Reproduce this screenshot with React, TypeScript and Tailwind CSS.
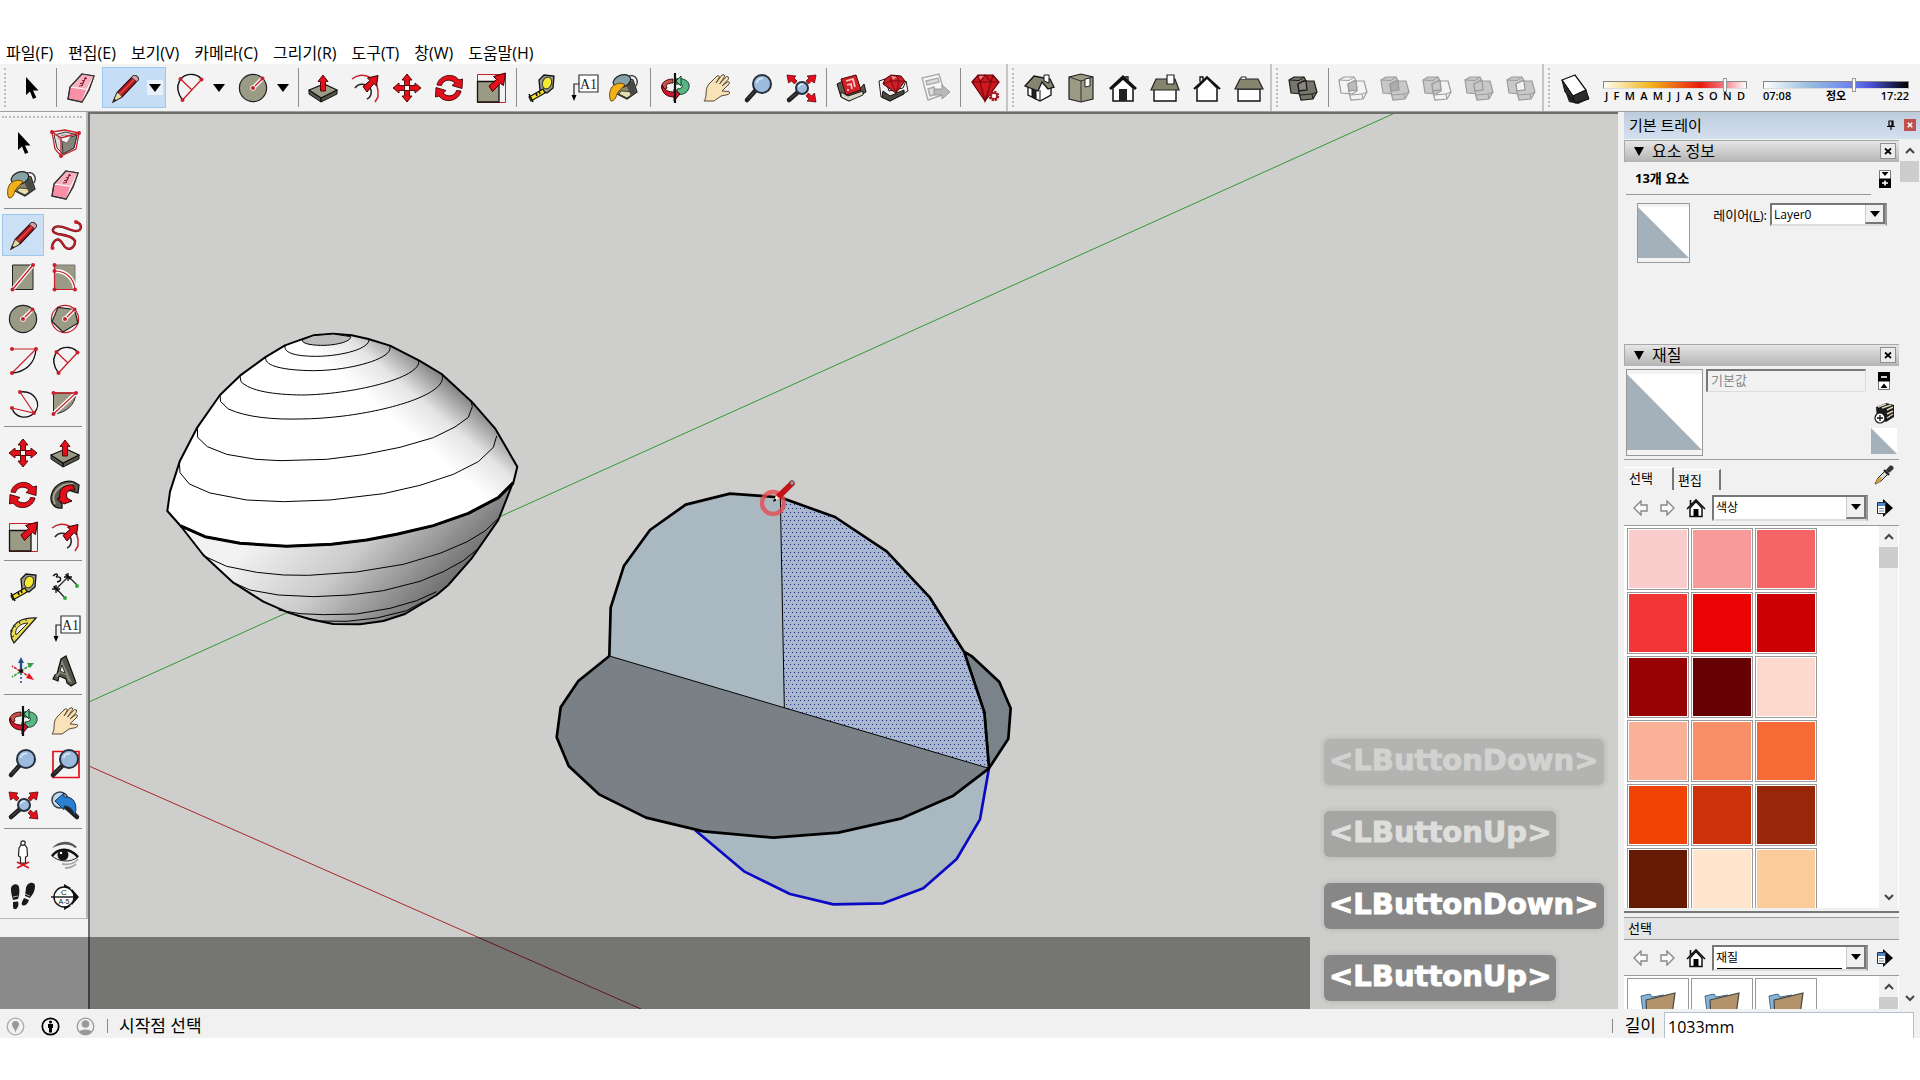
import { Fragment } from "react";
import type { ReactNode } from "react";

const RED = "#e3101c";
const DARK_RED = "#c8202c";
const OLIVE = "#9b9a84";

function Icon({ children }: { children: ReactNode }) {
  return (
    <svg viewBox="0 0 32 32" className="h-8 w-8 shrink-0 overflow-visible" fill="none" aria-hidden="true">
      {children}
    </svg>
  );
}

function Dots({ at }: { at: [number, number][] }) {
  return (
    <>
      {at.map(([x, y]) => (
        <circle key={`${x}-${y}`} cx={x} cy={y} r="2" fill={DARK_RED} />
      ))}
    </>
  );
}

function RadiusLine() {
  return (
    <>
      <path d="M16 16 25.5 6.5" stroke="#fff" strokeWidth="4" />
      <path d="M16 16 25.5 6.5" stroke={DARK_RED} strokeWidth="1.4" />
      <circle cx="16" cy="16" r="2.8" fill="#fff" />
      <Dots at={[[16, 16], [25.5, 6.5]]} />
    </>
  );
}

function Lens({ x = 19, y = 12, r = 9 }: { x?: number; y?: number; r?: number }) {
  return (
    <>
      <path d={`M${x - r * 0.7} ${y + r * 0.7} 4 28`} stroke="#222" strokeWidth="4.6" strokeLinecap="round" />
      <path d={`M${x - r * 0.8 - 1} ${y + r * 0.8 + 1} 5 26.5`} stroke="#555" strokeWidth="1" />
      <circle cx={x} cy={y} r={r} fill="#9dbbdc" stroke="#26303c" strokeWidth="2" />
      <path d={`M${x - r * 0.6} ${y - 1}A${r * 0.6} ${r * 0.6} 0 0 1 ${x + 1} ${y - r * 0.6}`} stroke="#dcebf8" strokeWidth="1.6" />
    </>
  );
}

const BigArrow = () => (
  <path d="M17.500 19.500 14 14 21.500 7.500 18.500 4.500 30.500 1 28.500 13.500 25.500 11.500Z" fill={RED} stroke="#300" strokeWidth="1" />
);

const CursorIcon = () => (
  <Icon>
    <path d="M11 5V23L15 19.500 18 27 21.300 25.500 18 18.500H23.500Z" fill="#000" />
  </Icon>
);

const ComponentIcon = () => (
  <Icon>
    <path d="M5 8 17 5 28 8 25 21 14 27 8 21Z" fill="#ddd" stroke="#333" />
    <path d="M13 13 28 8 25 21 14 27Z" fill="#85837a" stroke="#333" />
    <path d="M9 10 15 8 22 9 18 16 11 13Z" fill="#f8f8f8" stroke="#666" strokeWidth=".8" />
    <path d="M3 5 16 3 30 6 27 22 12 29 6 22ZM3 5 12 11 30 6M12 11V29" stroke={DARK_RED} strokeWidth="1.300" />
    <Dots at={[[3, 5], [30, 6], [12, 29]]} />
  </Icon>
);

const PaintIcon = () => (
  <Icon>
    <path d="M12 4 24 8 28 20 18 27 8 22Z" fill="#8b866e" stroke="#222" strokeWidth="1.200" />
    <path d="M12 19 26 20 18 26 10 22Z" fill="#e8dfae" stroke="#222" strokeWidth=".8" />
    <path d="M20 8 24 10 27 20 22 24 18 15Z" fill="#4a4a45" />
    <ellipse cx="13" cy="9" rx="9" ry="6" transform="rotate(-20 13 9)" fill="#86a2a6" stroke="#222" strokeWidth="1.200" />
    <path d="M20 4C27 2 30 9 27 14" stroke="#333" strokeWidth="1.300" />
    <path d="M16 13C13 16 10 18 8 22 7 26 5 29 2 29 0 26 0 19 3 15 7 11 12 10 16 13Z" fill="#f2b01c" stroke="#6d4a00" />
  </Icon>
);

const EraserIcon = () => (
  <Icon>
    <path d="M17 2 29 4 24 18 17 30 3 27 5 15Z" fill="#f78fa5" stroke="#333" strokeWidth="1.200" />
    <path d="M17 2 29 4 23 17 5 15Z" fill="#f4b3bf" />
    <path d="M5 15 22 17.500 17 30M22 17.500 29 4" stroke="#fff" strokeWidth="1.100" />
    <path d="M14 14 18 13.500M15 11.500 19 11M17 8.500 20 9M19 6 22 6.500M17 13 21 5" stroke="#8a2040" strokeWidth="1.100" />
    <path d="M17 2 29 4 24 18 17 30 3 27 5 15Z" stroke="#333" strokeWidth="1.200" />
  </Icon>
);

const PencilIcon = () => (
  <Icon>
    <path d="M4 30 8 20.500 24.500 3.500Q29 3 29.500 7.500L13 25Z" fill="#b51c22" stroke="#2a0b0b" strokeWidth="1.100" />
    <path d="M10.500 22.500 27 5.500" stroke="#e24a4a" strokeWidth="1.400" />
    <path d="M4 30 8 20.500Q11 21 13 25Z" fill="#e6d9a4" stroke="#333" strokeWidth=".8" />
    <path d="M4 30 5.500 26.500 7.500 28.500Z" fill="#222" />
    <path d="M22.500 5.500 24.500 3.500Q29 3 29.500 7.500L27.500 9.500Z" fill="#d8a0a8" stroke="#333" strokeWidth=".8" />
  </Icon>
);

const FreehandIcon = () => (
  <Icon>
    <path
      d="M27 3C34 5 33 12 27 12 20 12 13 5 6 8 2 11 4 14 9 15 15 16 24 17 26 22 26 29 20 32 16 28 13 24 11 19 7 21 4 23 3 26 3 29"
      stroke="#5c1014"
      strokeWidth="2.400"
    />
    <path
      d="M27 3C34 5 33 12 27 12 20 12 13 5 6 8 2 11 4 14 9 15 15 16 24 17 26 22 26 29 20 32 16 28 13 24 11 19 7 21 4 23 3 26 3 29"
      stroke={DARK_RED}
      strokeWidth="1.400"
    />
    <Dots at={[[27, 3], [3.5, 29]]} />
  </Icon>
);

const RectIcon = () => (
  <Icon>
    <path d="M5.500 4H26V28.500H5.500Z" fill={OLIVE} stroke="#222" />
    <path d="M5.500 28.500 26 4" stroke="#fff" strokeWidth="4" />
    <path d="M5.500 28.500 26 4" stroke={DARK_RED} strokeWidth="1.400" />
    <Dots at={[[5.5, 28.5], [26, 4]]} />
  </Icon>
);

const RotatedRectIcon = () => (
  <Icon>
    <path d="M5.500 4H26V28.500H5.500Z" fill={OLIVE} stroke="#777" />
    <path d="M5.500 10C17 10 25 17 26 28.500" stroke="#fff" strokeWidth="4" />
    <path d="M5.500 4V28.500H26C25 17 17 10 5.500 10" stroke={DARK_RED} strokeWidth="1.200" />
    <Dots at={[[5.5, 4], [5.5, 10], [5.5, 28.5], [26, 28.5]]} />
  </Icon>
);

const CircleIcon = () => (
  <Icon>
    <circle cx="16" cy="16" r="13.600" fill={OLIVE} stroke="#222" strokeWidth="1.200" />
    <RadiusLine />
  </Icon>
);

const PolygonIcon = () => (
  <Icon>
    <circle cx="16" cy="16" r="13.600" stroke={DARK_RED} strokeWidth="1.200" />
    <path d="M25.500 6.500 29 20 14 29 3 18.500 9 4.500Z" fill={OLIVE} stroke="#222" strokeWidth="1.200" />
    <RadiusLine />
  </Icon>
);

const ArcIcon = () => (
  <Icon>
    <path d="M29 4C28 19 18 27 5 28" stroke="#111" strokeWidth="1.300" />
    <path d="M5 4H29L5 28" stroke={DARK_RED} strokeWidth="1.200" />
    <Dots at={[[5, 4], [29, 4], [5, 28]]} />
  </Icon>
);

const TwoPointArcIcon = () => (
  <Icon>
    <path d="M9.500 28C-1 14 8 1 20 2.500 24 3 27 5 28.500 7.500" stroke="#111" strokeWidth="1.400" />
    <path d="M9.500 28 28.500 7.500M7.500 7 19 18" stroke={DARK_RED} strokeWidth="1.300" />
    <Dots at={[[9.5, 28], [28.5, 7.5], [7.5, 7]]} />
  </Icon>
);

const ThreePointArcIcon = () => (
  <Icon>
    <path d="M13 5C27 3 36 17 27 26 20 33 8 31 5 21" stroke="#111" strokeWidth="1.300" />
    <path d="M13 5 27 26 5 21" stroke={DARK_RED} strokeWidth="1.200" />
    <Dots at={[[13, 5], [27, 26], [5, 21]]} />
  </Icon>
);

const PieIcon = () => (
  <Icon>
    <path d="M4.500 6H27C26 18 17 26 4.500 27Z" fill={OLIVE} stroke="#222" />
    <path d="M4.500 27 27 6" stroke="#fff" strokeWidth="4" />
    <path d="M4.500 27 27 6H4.500" stroke={DARK_RED} strokeWidth="1.300" />
    <Dots at={[[4.5, 6], [27, 6], [4.5, 27]]} />
  </Icon>
);

const MoveIcon = () => (
  <Icon>
    {[0, 90, 180, 270].map((r) => (
      <path key={r} transform={`rotate(${r} 16 16)`} d="M16 2 21 8H18.500V13.500H13.500V8H11Z" fill={RED} stroke="#400" strokeWidth=".9" />
    ))}
  </Icon>
);

const RotateIcon = () => (
  <Icon>
    {[0, 180].map((r) => (
      <path
        key={r}
        transform={`rotate(${r} 16 16)`}
        d="M4 13C6 3 20 0 26 8L29.500 7 29 16.500 19 13.500 22 11C17 6 10 8 8.500 13.500Z"
        fill={RED}
        stroke="#400"
        strokeWidth=".9"
      />
    ))}
  </Icon>
);

const ScaleIcon = () => (
  <Icon>
    <path d="M2.500 2.500H30.500V30.500H2.500Z" stroke={DARK_RED} />
    <path d="M2.500 9.500H24V30H2.500Z" fill={OLIVE} stroke="#111" strokeWidth="1.300" />
    <BigArrow />
  </Icon>
);

const PushPullIcon = () => (
  <Icon>
    <path d="M2 18 14 26V30L2 22ZM14 26 30 18V22L14 30Z" fill="#55554b" stroke="#111" />
    <path d="M2 18 17 12 30 18 14 26Z" fill={OLIVE} stroke="#111" strokeWidth="1.200" />
    <path d="M16 3 21 9.500H18.500V19H13.500V9.500H11Z" fill={RED} stroke="#400" strokeWidth=".9" />
  </Icon>
);

const FollowMeIcon = () => (
  <Icon>
    <path d="M13 29C4 30 0 22 3 14 6 5 17 0 25 3L30 6 29 14 25 13C17 9 10 14 10 21L13 25Z" fill="#5c5b50" stroke="#111" strokeWidth="1.300" />
    <path d="M6 25C1 15 10 4 24 5" stroke="#aaa894" strokeWidth="1.800" />
    <path d="M24 6C14 5 9 12 11 19L8 20 15 25 23 22 18 19C16 13 20 10 26 11Z" fill={RED} stroke="#300" />
  </Icon>
);

const OffsetIcon = () => (
  <Icon>
    <path d="M3 7C14-2 31 6 29 25L26 30" stroke={DARK_RED} strokeWidth="1.500" />
    <path d="M6 16C11 9 20 13 22 18 23 22 21 26 18 27" stroke="#222" strokeWidth="1.500" />
    <path d="M18 20 14 14.500 21 8.500 18.500 6 29 3.500 27.500 14 25 11.500Z" fill={RED} stroke="#300" />
  </Icon>
);

const TapeIcon = () => (
  <Icon>
    <path d="M14 8 19 3 29 4 28 16 22 21 15 18Z" fill="#9a9887" stroke="#111" strokeWidth="1.300" />
    <ellipse cx="22" cy="11" rx="4.500" ry="6" transform="rotate(20 22 11)" fill="#f6ea30" stroke="#333" />
    <path d="M18 17 4 25 6 29 20 21Z" fill="#f0df25" stroke="#111" strokeWidth="1.200" />
    <path d="M4 22 8 30M11 21 12 24M14 19 15 22" stroke="#111" strokeWidth="1.600" />
  </Icon>
);

const DimensionIcon = () => (
  <Icon>
    <path d="M7 18 19 6M5 15 16 27M17 3 28 14" stroke="#222" strokeWidth="1.200" />
    <path d="M3 18H11M7 14V22M4.500 15.500 9.500 20.500M15 6H23M19 2V10M16.500 3.500 21.500 8.500" stroke="#111" strokeWidth="1.300" />
    <path d="M4 5C8 1 10 4 7 6 13 5 13 10 8 11" stroke="#111" strokeWidth="1.400" />
    <circle cx="16" cy="27" r="2" fill="#35a843" />
    <circle cx="28" cy="15" r="2" fill="#35a843" />
  </Icon>
);

const ProtractorIcon = () => (
  <Icon>
    <path d="M7 30C-1 18 8 4 29 5Z" fill="#eadb55" stroke="#222" strokeWidth="1.300" />
    <path d="M9 22C7 16 13 10 21 10Z" fill="#f3f3f3" stroke="#222" />
    <path d="M4 24 7 23M3 18 6 18M6 12 9 14M12 8 13 11M19 6 19 8" stroke="#333" />
  </Icon>
);

const TextIcon = () => (
  <Icon>
    <path d="M12 3H31V20H12Z" fill="#fff" stroke="#333" strokeWidth="1.200" />
    <path d="M12 12H7V24" stroke="#222" strokeWidth="1.200" />
    <path d="M4.500 23H9.500L7 29Z" fill="#000" />
    <text x="21.500" y="16.500" textAnchor="middle" fontFamily="Liberation Serif, serif" fontSize="14" fill="#222">A1</text>
  </Icon>
);

const AxesIcon = () => (
  <Icon>
    <path d="M14 17V6" stroke="#234f92" strokeWidth="2.400" />
    <path d="M11 8 14 2 17 8Z" fill="#234f92" />
    <path d="M14 18V28" stroke="#234f92" strokeWidth="1.500" strokeDasharray="2 2" />
    <path d="M14 16 22 11M13 17 5 22" stroke="#35a045" strokeWidth="1.600" strokeDasharray="3 1" />
    <path d="M20 8 27 8 23 13Z" fill="#35a045" />
    <path d="M14 16 21 21M13 16 5 11" stroke={DARK_RED} strokeWidth="1.600" strokeDasharray="3 1" />
    <path d="M22 18 27 25 19 23Z" fill={RED} />
    <circle cx="14" cy="16" r="2" fill="#111" />
  </Icon>
);

const Text3dIcon = () => (
  <Icon>
    <path d="M12 4 17 1 26 25 27 28 22 31 18 28 17 24 10 21 9 26 4 24 6 20 8 19Z" fill="#55554b" stroke="#111" strokeWidth="1.200" />
    <path d="M13 5 23 28 19 26 17 20 11 18 9 22 6 21 10 17Z" fill="#8c8a78" />
    <path d="M13 10 11 16 16 18Z" fill="#f3f3f3" stroke="#111" strokeWidth=".8" />
  </Icon>
);

const OrbitIcon = () => (
  <Icon>
    <path d="M17 7C26 5 33 11 29 18 27 22 22 23 18 22V17C23 17 25 14 22 12L17 12Z" fill="#59b584" stroke="#123d25" />
    <path d="M14 7C5 7 0 13 4 19L8 16C6 12 10 11 14 11Z" fill="#c8504c" stroke="#401010" />
    <path d="M3 13C2 22 9 25 15 25V29L21 22 15 17V20C10 20 6 19 3 13Z" fill="#cc1830" stroke="#400" />
    <path d="M16 1V31" stroke="#111" strokeWidth="2.200" />
    <path d="M22 4 17 9 22 14Z" fill="#75c79a" stroke="#123d25" />
  </Icon>
);

const HandIcon = () => (
  <Icon>
    <path
      d="M3 29C7 24 3 18 8 12L16 4Q18 3 18.500 5L15 11 21 3Q23.500 2 24 4L18.500 12 25.500 4.500Q28 4 27.500 7L21 14 27 9.500Q29.500 10 28 12L21 19 28 19.500Q30 21 27 22.500L20 24 13 29Z"
      fill="#fae2b8"
      stroke="#5b4a36"
      strokeWidth="1"
    />
  </Icon>
);

const ZoomIcon = () => (
  <Icon>
    <Lens />
  </Icon>
);

const ZoomWindowIcon = () => (
  <Icon>
    <path d="M4 4.500H30V30.500H4Z" stroke={RED} strokeWidth="1.700" />
    <Lens x={20} />
  </Icon>
);

const ZoomExtentsIcon = () => (
  <Icon>
    <Lens x={17} y={16} r={6} />
    <path d="M2 3 11 4 9 6 12 9 9.500 12 6.500 9 3.500 11ZM31 3 22 4 24 6 21 9 23.500 12 26.500 9 29.500 11ZM31 30 22 29 24 27 21 24 23.500 21 26.500 24 29.500 21Z" fill={RED} stroke="#400" strokeWidth=".7" />
  </Icon>
);

const PreviousIcon = () => (
  <Icon>
    <circle cx="11" cy="11" r="8" fill="#c5d8e8" stroke="#33414e" strokeWidth="1.500" />
    <path d="M17 18 28 28" stroke="#222" strokeWidth="4.500" strokeLinecap="round" />
    <path d="M6 12 15 4V8C24 7 29 14 26 26 23 20 21 17 15 17V21Z" fill="#2b7fd0" stroke="#12365e" />
  </Icon>
);

const PositionCameraIcon = () => (
  <Icon>
    <path d="M10 29 22 23M10 23 22 29M16 21V26" stroke={RED} strokeWidth="1.500" />
    <path d="M14 6 12 9 11.500 17 13.500 18V24H18.500V18L20.500 17 20 9 18 6Z" fill="#fff" stroke="#222" strokeWidth="1.200" />
    <circle cx="16" cy="4" r="2.200" fill="#fff" stroke="#222" strokeWidth="1.200" />
  </Icon>
);

const LookAroundIcon = () => (
  <Icon>
    <path d="M3 9C10 1 21 1 28 8L26 9C20 4 12 5 3 9Z" fill="#555" />
    <path d="M3 17C9 8 22 8 29 18 21 24 10 23 3 17Z" fill="#eee" stroke="#222" />
    <path d="M3 17C9 9 20 8 29 18" stroke="#111" strokeWidth="2.600" />
    <circle cx="14" cy="16" r="5.500" fill="#111" />
    <circle cx="12" cy="14" r="1.300" fill="#fff" />
    <path d="M13 25C20 26 26 24 29 20M16 29C21 29 25 27 27 25" stroke="#aaa" strokeWidth="1.800" />
  </Icon>
);

const WalkIcon = () => (
  <Icon>
    <path d="M4 9C3 3 11 1 12 6 13 11 12 15 11 18L6 19C5 15 4 12 4 9ZM6 21 11 20.500C13 27 7 31 6 26Z" fill="#1a1a1a" />
    <path d="M19 7C20 1 28 0 28 5 28 11 25 14 23 17L18 15ZM17 17 22 19C20 26 13 26 15 21Z" fill="#1a1a1a" />
    <path d="M6 16 11 15M18 13 23 15" stroke="#ccc" strokeWidth=".8" />
  </Icon>
);

const SectionIcon = () => (
  <Icon>
    <path d="M15 3 22 7H15ZM23 8 30 16 23 24ZM15 29 22 25H15Z" fill="#111" />
    <circle cx="15" cy="16" r="10" fill="#fff" stroke="#111" strokeWidth="1.400" />
    <path d="M2 16H29" stroke="#111" strokeWidth="1.400" />
    <text x="15" y="14" textAnchor="middle" fontFamily="Liberation Sans, sans-serif" fontSize="8" fill="#111">C</text>
    <text x="15" y="23" textAnchor="middle" fontFamily="Liberation Sans, sans-serif" fontSize="7" fill="#111">A-5</text>
  </Icon>
);

const WarehouseIcon = () => (
  <Icon>
    <path d="M2 12 8 9 11 22 25 17 29 12 31 20 14 29 6 25Z" fill="#5d5a50" stroke="#111" />
    <path d="M6 20 13 24 28 19V23L14 29 6 25Z" fill="#d8d4c8" stroke="#111" strokeWidth=".9" />
    <path d="M6 7 21 3 26 18 11 23Z" fill="#d32128" stroke="#400" />
    <path d="M11 9 18 7 20 15M12 13 16 12 17 17M13 17V19" stroke="#f4c9c9" strokeWidth="1.800" />
  </Icon>
);

const ExtensionWarehouseIcon = () => (
  <Icon>
    <path d="M2 9 8 7 12 19 26 16 29 9 31 19 13 29 4 25Z" fill="#f2f0ec" stroke="#222" />
    <path d="M6 19 13 24 27 18V22L13 29 5 25Z" fill="#4a4840" stroke="#111" />
    <path d="M8 7 14 3 24 4 28 9 19 21 6 12Z" fill="#cf1f27" stroke="#400" />
    <path d="M6 12 14 9 28 9M14 9 19 21 22 9M14 3 14 9 20 4 22 9" stroke="#7b0a10" />
    <path d="M14 4 20 5 16 8Z" fill="#f09090" />
  </Icon>
);

const LayoutIcon = () => (
  <Icon>
    <path d="M3 6 20 2 26 22 9 28Z" fill="#f8f8f8" stroke="#aaa" strokeWidth="1.400" />
    <path d="M7 9 19 6 20 10 8 13ZM9 17 15 15 17 22 11 24Z" fill="#ddd" stroke="#aaa" strokeWidth="1.400" />
    <path d="M15 17H23V13L31 20 23 27V23H15Z" fill="#b8b8b8" stroke="#999" />
  </Icon>
);

const RubyIcon = () => (
  <Icon>
    <path d="M3 10 9 3H24L30 10 16 29Z" fill="#cf1720" stroke="#600008" strokeWidth="1.200" />
    <path d="M3 10H30M9 3 11 10 16 29 22 10 24 3M11 10 16 3 22 10" stroke="#7b0a10" strokeWidth="1.200" />
    <path d="M10 4H15L11 8Z" fill="#f28088" />
    <circle cx="25" cy="24" r="4" fill="#f3f3f3" stroke="#a31820" strokeWidth="2.600" strokeDasharray="2.200 .9" />
    <circle cx="25" cy="24" r="3" stroke="#a31820" strokeWidth="1.500" />
  </Icon>
);

const IsoHouseIcon = () => (
  <Icon>
    <path d="M5 15V23L17 29 28 23V12L18 6Z" fill="#fff" stroke="#111" strokeWidth="1.300" />
    <path d="M17 18V29M9 17 13 19V27L9 25Z" stroke="#111" fill="#222" />
    <path d="M2 14 11 4 27 7 31 15 25 17 19 10 15 19Z" fill="#85846f" stroke="#111" strokeWidth="1.300" />
    <path d="M21 3H26V11L21 9Z" fill="#fff" stroke="#111" />
  </Icon>
);

const TopHouseIcon = () => (
  <Icon>
    <path d="M4 5 16 2 28 5V27L16 30 4 27Z" fill={OLIVE} stroke="#222" strokeWidth="1.200" />
    <path d="M16 9V30M4 5 16 9 28 5" stroke="#333" />
    <path d="M20 7 25 6V14L20 15Z" fill="#fff" stroke="#222" />
  </Icon>
);

const FrontHouseIcon = () => (
  <Icon>
    <path d="M6 16 16 7 26 16V29H6Z" fill="#fff" stroke="#111" strokeWidth="1.500" />
    <path d="M3 17 16 5 29 17" stroke="#111" strokeWidth="2.800" />
    <path d="M18 5H21V8" stroke="#111" strokeWidth="1.300" />
    <path d="M12 17H20V29H12Z" fill="#222" />
  </Icon>
);

const RightHouseIcon = () => (
  <Icon>
    <path d="M5 16H27V29H5Z" fill="#fff" stroke="#111" strokeWidth="1.400" />
    <path d="M7 7H26L30 18H2Z" fill="#85846f" stroke="#222" strokeWidth="1.200" />
    <path d="M18 3H25V12H18Z" fill="#fff" stroke="#222" strokeWidth="1.200" />
  </Icon>
);

const BackHouseIcon = () => (
  <Icon>
    <path d="M6 16 16 6 26 16V29H6Z" fill="#fff" stroke="#111" strokeWidth="1.500" />
    <path d="M3 17 16 5 29 17" stroke="#111" strokeWidth="2" />
    <path d="M9 10V5H12V8" stroke="#111" strokeWidth="1.300" />
  </Icon>
);

const LeftHouseIcon = () => (
  <Icon>
    <path d="M5 17H27V29H5Z" fill="#fff" stroke="#111" strokeWidth="1.400" />
    <path d="M7 7H25L30 17H2Z" fill="#85846f" stroke="#222" strokeWidth="1.200" />
    <path d="M8 7V5H13V7" fill="#fff" stroke="#222" />
  </Icon>
);

// Two overlapping boxes; the solid tools differ by which part is filled.
function SolidIcon({ a, b, mid, line = "#9c9c9c" }: { a: string; b: string; mid: string; line?: string }) {
  return (
    <Icon>
      <path d="M2 8 7 5 17 5 19 9 20 19 15 22 4 21Z" fill={a} stroke={line} strokeWidth="1.200" />
      <path d="M11 12 17 9 27 9 30 20 26 27 14 28 12 21Z" fill={b} stroke={line} strokeWidth="1.200" />
      <path d="M2 8 12 8.500 17 5M13 23 25 22 30 20M25 22 26 27" stroke={line} strokeWidth="1" />
      <path d="M11 12 17 9 19 9 20 18 12 19Z" fill={mid} stroke={line} strokeWidth="1.300" />
    </Icon>
  );
}

const ShadowIcon = () => (
  <Icon>
    <path d="M6 19 15 26 28 22 30 27 19 32 10 30Z" fill="#222" />
    <path d="M3 8 16 3 27 18 14 24Z" fill="#fff" stroke="#111" strokeWidth="1.300" />
    <path d="M3 8 6 20 14 28V24ZM14 24 27 18 30 27 16 31Z" fill="#2b2b2b" stroke="#111" />
  </Icon>
);

type Tool = { label: string; icon: ReactNode; active?: boolean; menu?: boolean };

const mainTools: Tool[][] = [
  [{ label: "Select", icon: <CursorIcon /> }],
  [
    { label: "Eraser", icon: <EraserIcon /> },
    { label: "Line", icon: <PencilIcon />, active: true, menu: true },
    { label: "Arc", icon: <TwoPointArcIcon />, menu: true },
    { label: "Circle", icon: <CircleIcon />, menu: true },
  ],
  [
    { label: "Push/Pull", icon: <PushPullIcon /> },
    { label: "Offset", icon: <OffsetIcon /> },
    { label: "Move", icon: <MoveIcon /> },
    { label: "Rotate", icon: <RotateIcon /> },
    { label: "Scale", icon: <ScaleIcon /> },
  ],
  [
    { label: "Tape Measure", icon: <TapeIcon /> },
    { label: "Text", icon: <TextIcon /> },
    { label: "Paint Bucket", icon: <PaintIcon /> },
  ],
  [
    { label: "Orbit", icon: <OrbitIcon /> },
    { label: "Pan", icon: <HandIcon /> },
    { label: "Zoom", icon: <ZoomIcon /> },
    { label: "Zoom Extents", icon: <ZoomExtentsIcon /> },
  ],
  [
    { label: "3D Warehouse", icon: <WarehouseIcon /> },
    { label: "Extension Warehouse", icon: <ExtensionWarehouseIcon /> },
    { label: "Send to LayOut", icon: <LayoutIcon /> },
  ],
  [{ label: "Extension Manager", icon: <RubyIcon /> }],
];

const viewTools: Tool[][] = [
  [
    { label: "Iso", icon: <IsoHouseIcon /> },
    { label: "Top", icon: <TopHouseIcon /> },
    { label: "Front", icon: <FrontHouseIcon /> },
    { label: "Right", icon: <RightHouseIcon /> },
    { label: "Back", icon: <BackHouseIcon /> },
    { label: "Left", icon: <LeftHouseIcon /> },
  ],
];

const solidTools: Tool[][] = [
  [{ label: "Outer Shell", icon: <SolidIcon a="#77766a" b="#77766a" mid="#88877a" line="#1c1c1c" /> }],
  [
    { label: "Intersect", icon: <SolidIcon a="none" b="none" mid="#bbb" /> },
    { label: "Union", icon: <SolidIcon a="#c8c8c8" b="#c8c8c8" mid="#adadad" /> },
    { label: "Subtract", icon: <SolidIcon a="#c8c8c8" b="none" mid="#c8c8c8" /> },
    { label: "Trim", icon: <SolidIcon a="#c8c8c8" b="#c8c8c8" mid="#c8c8c8" /> },
    { label: "Split", icon: <SolidIcon a="#c8c8c8" b="#c8c8c8" mid="#f3f3f3" /> },
  ],
];

const sideTools: Tool[][] = [
  [
    { label: "Select", icon: <CursorIcon /> },
    { label: "Make Component", icon: <ComponentIcon /> },
    { label: "Paint Bucket", icon: <PaintIcon /> },
    { label: "Eraser", icon: <EraserIcon /> },
  ],
  [
    { label: "Line", icon: <PencilIcon />, active: true },
    { label: "Freehand", icon: <FreehandIcon /> },
    { label: "Rectangle", icon: <RectIcon /> },
    { label: "Rotated Rectangle", icon: <RotatedRectIcon /> },
    { label: "Circle", icon: <CircleIcon /> },
    { label: "Polygon", icon: <PolygonIcon /> },
    { label: "Arc", icon: <ArcIcon /> },
    { label: "2 Point Arc", icon: <TwoPointArcIcon /> },
    { label: "3 Point Arc", icon: <ThreePointArcIcon /> },
    { label: "Pie", icon: <PieIcon /> },
  ],
  [
    { label: "Move", icon: <MoveIcon /> },
    { label: "Push/Pull", icon: <PushPullIcon /> },
    { label: "Rotate", icon: <RotateIcon /> },
    { label: "Follow Me", icon: <FollowMeIcon /> },
    { label: "Scale", icon: <ScaleIcon /> },
    { label: "Offset", icon: <OffsetIcon /> },
  ],
  [
    { label: "Tape Measure", icon: <TapeIcon /> },
    { label: "Dimension", icon: <DimensionIcon /> },
    { label: "Protractor", icon: <ProtractorIcon /> },
    { label: "Text", icon: <TextIcon /> },
    { label: "Axes", icon: <AxesIcon /> },
    { label: "3D Text", icon: <Text3dIcon /> },
  ],
  [
    { label: "Orbit", icon: <OrbitIcon /> },
    { label: "Pan", icon: <HandIcon /> },
    { label: "Zoom", icon: <ZoomIcon /> },
    { label: "Zoom Window", icon: <ZoomWindowIcon /> },
    { label: "Zoom Extents", icon: <ZoomExtentsIcon /> },
    { label: "Previous", icon: <PreviousIcon /> },
  ],
  [
    { label: "Position Camera", icon: <PositionCameraIcon /> },
    { label: "Look Around", icon: <LookAroundIcon /> },
    { label: "Walk", icon: <WalkIcon /> },
    { label: "Section Plane", icon: <SectionIcon /> },
  ],
];

const menus = ["파일(F)", "편집(E)", "보기(V)", "카메라(C)", "그리기(R)", "도구(T)", "창(W)", "도움말(H)"];

const swatches = [
  "bg-[#fbcccc]", "bg-[#f99a9a]", "bg-[#f56565]",
  "bg-[#f23535]", "bg-[#ec0303]", "bg-[#cc0003]",
  "bg-[#990204]", "bg-[#660103]", "bg-[#fcd9cc]",
  "bg-[#f9b298]", "bg-[#f98f66]", "bg-[#f66b35]",
  "bg-[#f04304]", "bg-[#cc330a]", "bg-[#982608]",
  "bg-[#661a04]", "bg-[#fee5cc]", "bg-[#fbcc99]",
];

function ToolButton({ tool }: { tool: Tool }) {
  if (tool.menu) {
    return (
      <span className={`flex h-[41px] w-16 items-center border ${tool.active ? "border-[#99c9ef] bg-[#c5def5]" : "border-transparent"}`}>
        <button type="button" aria-label={tool.label} className="flex w-11 items-center justify-center">
          {tool.icon}
        </button>
        <button
          type="button"
          aria-label={`${tool.label} menu`}
          className={`flex h-[15px] w-4 items-center justify-center ${tool.active ? "bg-[#e9f0f8]" : ""}`}
        >
          <svg viewBox="0 0 12 8" className="h-2 w-3" aria-hidden="true">
            <path d="M0 0H12L6 8Z" fill="#000" />
          </svg>
        </button>
      </span>
    );
  }
  return (
    <button
      type="button"
      aria-label={tool.label}
      className={`flex h-[42px] w-[42px] items-center justify-center border ${tool.active ? "border-[#99c9ef] bg-[#cce0f5]" : "border-transparent"}`}
    >
      {tool.icon}
    </button>
  );
}

function Grip() {
  return (
    <div className="flex w-[10px] shrink-0 justify-center py-1">
      <div className="w-0 border-l-2 border-dotted border-[#bdbdbd]" />
    </div>
  );
}

function Toolbar({ groups }: { groups: Tool[][] }) {
  return (
    <div className="flex shrink-0 border-r-2 border-[#c4c4c4]">
      <Grip />
      {groups.map((group, i) => (
        <Fragment key={i}>
          {i > 0 && (
            <div className="flex w-2 justify-center py-1">
              <div className="w-px bg-[#8c8c8c]" />
            </div>
          )}
          <div className="flex items-center">
            {group.map((tool) => (
              <ToolButton key={tool.label} tool={tool} />
            ))}
          </div>
        </Fragment>
      ))}
    </div>
  );
}

function ShadowBar() {
  const range =
    "block h-2 w-full appearance-none border border-[#888] border-b-[#ddd] [&::-webkit-slider-thumb]:h-[14px] [&::-webkit-slider-thumb]:w-1 [&::-webkit-slider-thumb]:appearance-none [&::-webkit-slider-thumb]:border [&::-webkit-slider-thumb]:border-[#999] [&::-webkit-slider-thumb]:bg-white";
  return (
    <div className="flex flex-1">
      <Grip />
      <button type="button" aria-label="Shadows" className="flex w-[42px] items-center justify-center">
        <ShadowIcon />
      </button>
      <div className="ml-[7px] w-36 pt-[17px]">
        <input
          type="range"
          aria-label="Date"
          min={0}
          max={365}
          defaultValue={314}
          className={`${range} [background-image:linear-gradient(to_right,#fffdf0,#f0b41c_33%,#e81a10_68%,#f06a70_82%,#fff_100%)]`}
        />
        <div className="mt-px flex justify-between px-0.5 text-[11px] leading-3 font-semibold">
          {"JFMAMJJASOND".split("").map((m, i) => (
            <span key={i}>{m}</span>
          ))}
        </div>
      </div>
      <div className="ml-4 w-[146px] pt-[17px]">
        <input
          type="range"
          aria-label="Time"
          min={0}
          max={100}
          defaultValue={63}
          className={`${range} [background-image:linear-gradient(to_right,#fff,#9cc0e0_30%,#6b7ff0_62%,#4a52d8_74%,#000_100%)]`}
        />
        <div className="mt-px flex justify-between text-[11px] leading-3 font-semibold">
          <span>07:08</span>
          <span>정오</span>
          <span>17:22</span>
        </div>
      </div>
    </div>
  );
}

function Model() {
  return (
    <svg viewBox="90 114 1528 895" preserveAspectRatio="xMinYMin slice" className="absolute inset-0 h-full w-full" aria-hidden="true">
      <defs>
        <linearGradient id="upper" gradientUnits="userSpaceOnUse" x1="145" y1="-170" x2="272" y2="-319">
          <stop offset="0" stopColor="#fff" />
          <stop offset=".5" stopColor="#e4e4e4" />
          <stop offset="1" stopColor="#848484" />
        </linearGradient>
        <linearGradient id="lower" gradientUnits="userSpaceOnUse" x1="500" y1="500" x2="850" y2="850">
          <stop offset="0" stopColor="#f2f2f2" />
          <stop offset=".5" stopColor="#cacaca" />
          <stop offset="1" stopColor="#747474" />
        </linearGradient>
        <pattern id="picked" width="12" height="24" patternUnits="userSpaceOnUse">
          <rect width="12" height="24" fill="#a9b6cf" />
          <rect width="3" height="3" fill="#1c2a78" />
          <rect x="6" y="12" width="3" height="3" fill="#1c2a78" />
        </pattern>
      </defs>
      <path d="M90 701.500 1395 113" stroke="#2f9a33" strokeWidth="1" />
      <path d="M90 766.500 641 1009" stroke="#a8282c" strokeWidth="1" />

      <g transform="translate(150 310) scale(.33333)" fill="none" stroke="#000" strokeLinejoin="round">
        <path
          d="M92 648 160 735 250 818 340 875 415 908 480 928 550 942 630 943 700 933 765 912 860 855 895 825 965 745 1045 630 1088 520 850 620 410 690Z"
          fill="url(#lower)"
          strokeWidth="6"
        />
        <path
          d="M52 603 60 545 90 452 142 352 210 255 270 197 345 142 405 106 455 88 490 76 550 71 605 76 655 87 720 107 808 152 875 192 965 275 1035 355 1102 470 1090 518 1045 563 955 610 850 647 740 673 650 690 545 703 410 709 270 700 165 680 92 648Z"
          fill="url(#upper)"
          strokeWidth="6"
        />
        <path d="M92 648 165 680 270 700 410 709 545 703 650 690 740 673 850 647 955 610 1045 563 1090 518" strokeWidth="9" />
        <path d="M456 90C456 102 490 107 525 106 570 104 604 92 602 80L550 72 490 77Z" fill="#bcbcbc" strokeWidth="3" />
        <g strokeWidth="3">
          <path d="M405 108C402 130 440 139 500 139 580 138 660 115 657 88" />
          <path d="M347 144C345 168 400 181 490 182 600 182 735 145 719 108" />
          <path d="M270 198 273 215C300 243 370 254 455 255 600 254 815 205 806 152" />
          <path d="M210 255 212 275 235 297C290 322 370 329 450 327 640 326 900 262 876 194" />
          <path d="M142 354 143 382 172 410 230 433 318 448 390 452 530 448 640 434 750 412 850 383 915 351 955 322 967 290 963 272" />
          <path d="M88 455 90 488 118 522 180 549 290 570 400 575 540 570 700 551 810 526 910 493 985 455 1030 412 1040 378" />
          <path d="M160 737 230 769 320 787 400 795 475 796 620 786 760 763 870 730 950 696 1005 663 1045 625" />
          <path d="M255 820 300 840 385 855 490 860 600 855 700 842 810 814 880 785 940 752 980 720" />
          <path d="M385 900 450 911 520 914 620 912 720 895 800 872 860 845" />
          <path d="M440 917 510 933 590 934 680 924 770 902 820 875" />
        </g>
      </g>

      <g transform="translate(540 460) scale(.33333)" strokeLinejoin="round" fill="none">
        <path d="M465 1110 612 1234 750 1302 880 1333 1030 1330 1150 1285 1250 1197 1320 1078 1347 925" fill="#a9b8c1" stroke="#0a0ac4" strokeWidth="8" />
        <path d="M1272 575 1297 590 1378 666 1412 745 1405 836 1347 925 1333 757Z" fill="#798389" stroke="#000" strokeWidth="8" />
        <path d="M208 588 115 663 62 742 50 832 86 918 177 1003 318 1073 490 1114 700 1133 895 1118 1085 1075 1240 1007 1347 925Z" fill="#798187" />
        <path d="M208 588 212 443 252 317 330 210 437 134 570 101 720 112 733 743Z" fill="#a9b8c1" />
        <path d="M722 112 885 171 1040 274 1170 413 1272 575 1333 757 1347 925 733 743Z" fill="url(#picked)" />
        <path
          d="M208 588 115 663 62 742 50 832 86 918 177 1003 318 1073 490 1114 700 1133 895 1118 1085 1075 1240 1007 1347 925"
          stroke="#000"
          strokeWidth="8"
        />
        <path d="M208 588 212 443 252 317 330 210 437 134 570 101 720 112 885 171 1040 274 1170 413 1272 575 1333 757 1347 925" stroke="#000" strokeWidth="8" />
        <path d="M208 588 1347 925M721 114 733 743" stroke="#000" strokeWidth="3" />
        <circle cx="699" cy="129" r="33" stroke="#e84a50" strokeOpacity=".8" strokeWidth="13" />
        <path d="M701 124 710 103 752 62 766 72 722 116Z" fill="#c41218" />
        <path d="M701 124 708 106 720 116Z" fill="#f0e6c8" />
        <path d="M701 124 704 117 708 120Z" fill="#000" stroke="#000" strokeWidth="3" />
        <circle cx="756" cy="69" r="7" fill="#b98a90" stroke="#6b3338" strokeWidth="3" />
      </g>
    </svg>
  );
}

const keyLog = [
  { text: "<LButtonDown>", tone: "bg-[#b3b3b2] text-[#d2d2d1]" },
  { text: "<LButtonUp>", tone: "bg-[#a5a5a4] text-[#dededd]" },
  { text: "<LButtonDown>", tone: "bg-[#878787] text-white" },
  { text: "<LButtonUp>", tone: "bg-[#878787] text-white" },
];

function PanelHeader({ title }: { title: string }) {
  return (
    <div className="flex h-[22px] shrink-0 items-center border-t border-l border-[#a8a8a8] bg-linear-to-b from-[#e6e6e6] to-[#b4b4b4] pr-[3px] pb-px pl-[9px]">
      <svg viewBox="0 0 10 9" className="h-[9px] w-[10px]" aria-hidden="true">
        <path d="M0 0H10L5 9Z" fill="#000" />
      </svg>
      <h2 className="ml-2 flex-1 text-base leading-5">{title}</h2>
      <button type="button" aria-label={`${title} 닫기`} className="flex h-4 w-4 items-center justify-center border border-[#909090] bg-[#ececec]">
        <svg viewBox="0 0 8 8" className="h-2 w-2" aria-hidden="true">
          <path d="M1 1.500 7 7M7 1.500 1 7" stroke="#000" strokeWidth="1.700" />
        </svg>
      </button>
    </div>
  );
}

function Preview({ className }: { className: string }) {
  return (
    <div className={`border border-[#989898] bg-[#f3f3f3] ${className}`}>
      <svg viewBox="0 0 10 10" preserveAspectRatio="none" className="block h-full w-full" aria-hidden="true">
        <path d="M0 0H10V10H0Z" fill="#fff" />
        <path d="M0 0 10 10H0Z" fill="#a4b1ba" />
      </svg>
    </div>
  );
}

function Dropdown({ id, value, className, underline }: { id: string; value: string; className: string; underline?: boolean }) {
  return (
    <div className={`relative border-2 border-[#777] border-r-[#999] border-b-[#ddd] bg-white ${className}`}>
      <select id={id} aria-label={value} className="block h-full w-full appearance-none bg-transparent pr-5 pl-0.5 text-xs leading-4 outline-none">
        <option>{value}</option>
      </select>
      {underline && <span className="pointer-events-none absolute right-6 bottom-0 left-[3px] h-px bg-black" />}
      <span className="pointer-events-none absolute inset-y-0 right-0 flex w-5 items-center justify-center border-r-2 border-b-2 border-l border-[#777] border-l-[#ccc] bg-[#f0f0f0]">
        <svg viewBox="0 0 10 6" className="h-[6px] w-[10px]" aria-hidden="true">
          <path d="M0 0H10L5 6Z" fill="#000" />
        </svg>
      </span>
    </div>
  );
}

function Chevron({ down }: { down?: boolean }) {
  return (
    <svg viewBox="0 0 10 7" className="h-[7px] w-[10px]" fill="none" aria-hidden="true">
      <path d={down ? "M1 1 5 5 9 1" : "M1 6 5 2 9 6"} stroke="#444" strokeWidth="2" />
    </svg>
  );
}

function ScrollBar({ down = true }: { down?: boolean }) {
  return (
    <div className="mr-px flex w-[19px] shrink-0 flex-col bg-[#f1f1f1]">
      <button type="button" aria-label="위로" className="flex h-[21px] shrink-0 items-center justify-center">
        <Chevron />
      </button>
      <div className="min-h-0 flex-1">
        <div className="h-[21px] max-h-full bg-[#cdcdcd]" />
      </div>
      {down && (
        <button type="button" aria-label="아래로" className="flex h-[21px] shrink-0 items-center justify-center">
          <Chevron down />
        </button>
      )}
    </div>
  );
}

function NavRow({ id, value, underline }: { id: string; value: string; underline?: boolean }) {
  return (
    <div className="flex h-9 shrink-0 items-center border-b border-[#999] pr-1 pl-[9px]">
      <button type="button" aria-label="뒤로">
        <svg viewBox="0 0 15 16" className="h-4 w-[15px]" fill="#fafafa" aria-hidden="true">
          <path d="M1 8 8 1V5H14V11H8V15Z" stroke="#888" strokeWidth="1.400" />
        </svg>
      </button>
      <button type="button" aria-label="앞으로" className="ml-3">
        <svg viewBox="0 0 15 16" className="h-4 w-[15px]" fill="#fafafa" aria-hidden="true">
          <path d="M14 8 7 1V5H1V11H7V15Z" stroke="#888" strokeWidth="1.400" />
        </svg>
      </button>
      <button type="button" aria-label="모델에서" className="ml-[11px]">
        <svg viewBox="0 0 20 20" className="h-5 w-5" fill="none" aria-hidden="true">
          <path d="M4 10V18.500H16V10L10 3.500Z" fill="#fff" stroke="#111" strokeWidth="1.500" />
          <path d="M1 11 10 2 19 11M4.500 7V2" stroke="#111" strokeWidth="1.600" />
          <path d="M7.500 11H12.500V18H7.500Z" fill="#000" />
        </svg>
      </button>
      <Dropdown id={id} value={value} underline={underline} className="ml-[6px] h-[26px] flex-1" />
      <button type="button" aria-label="세부 정보" className="mr-0.5 ml-[9px]">
        <svg viewBox="0 0 16 18" className="h-[18px] w-4" aria-hidden="true">
          <path d="M6 0 16 9 6 18Z" fill="#000" />
          <path d="M.5 3.500H8.500V14.500H.5Z" fill="#fff" stroke="#234" />
          <path d="M1 4H8V7H1Z" fill="#4a88c8" />
          <path d="M2 9.500H7M2 12H7" stroke="#789" />
        </svg>
      </button>
    </div>
  );
}

function Folder() {
  return (
    <svg viewBox="0 0 36 30" className="mt-[13px] ml-3 h-[30px] w-9 shrink-0" aria-hidden="true">
      <path d="M1 4 10 2 12 5 24 3V28H4Z" fill="#86b3d6" stroke="#466a88" />
      <path d="M6 8 35 1 31 30H7Z" fill="#b3936a" stroke="#444" strokeWidth="1.200" />
    </svg>
  );
}

function Tray() {
  return (
    <aside className="ml-[6px] flex w-[296px] shrink-0 flex-col bg-[#f1f1f1]">
      <div className="flex h-[27px] shrink-0 items-center bg-linear-to-b from-[#bccbdb] to-[#d5e0ef] pr-1 pb-0.5 pl-[5px]">
        <h1 className="flex-1 text-[15px] leading-5">기본 트레이</h1>
        <button type="button" aria-label="고정" className="mr-[9px]">
          <svg viewBox="0 0 8 10" className="h-[10px] w-2" fill="none" aria-hidden="true">
            <path d="M2 1H6V6H2ZM5 1V6M0 6.500H8M4 7V10" stroke="#000" strokeWidth="1.200" />
          </svg>
        </button>
        <button type="button" aria-label="닫기" className="flex h-3 w-3 items-center justify-center bg-[#c0504d]">
          <svg viewBox="0 0 8 8" className="h-[6px] w-[6px]" aria-hidden="true">
            <path d="M1 1 7 7M7 1 1 7" stroke="#fff" strokeWidth="2" />
          </svg>
        </button>
      </div>
      <div className="flex min-h-0 flex-1 pt-px">
        <div className="flex min-w-0 flex-1 flex-col">
          <PanelHeader title="요소 정보" />
          <section className="h-[182px] shrink-0 pt-2">
            <div className="flex items-start pr-2 pl-0.5">
              <p className="mr-2 flex-1 border-b border-[#999] pb-2 pl-[9px] text-[13px] leading-4 font-bold">13개 요소</p>
              <button type="button" aria-label="세부 정보 표시">
                <svg viewBox="0 0 12 18" className="h-[18px] w-3" aria-hidden="true">
                  <path d="M.5.5H11.500V17.500H.5Z" fill="#fff" stroke="#777" />
                  <path d="M2.500 2H9.500L6 6ZM0 8.500H12V18H0Z" fill="#000" />
                  <path d="M3 13H9M6 10.500V15.500" stroke="#fff" strokeWidth="1.600" />
                </svg>
              </button>
            </div>
            <div className="mt-2 flex items-start pr-3 pl-[13px]">
              <Preview className="h-[60px] w-[53px] pt-[3px] pb-1" />
              <label htmlFor="layer" className="ml-auto pt-0.5 pr-[3px] text-[13px] leading-5">
                레이어(<u>L</u>):
              </label>
              <Dropdown id="layer" value="Layer0" className="h-[23px] w-[117px]" />
            </div>
          </section>
          <PanelHeader title="재질" />
          <section className="flex min-h-0 flex-1 flex-col pt-[3px]">
            <div className="flex h-[91px] shrink-0 border-b border-[#999] pl-0.5">
              <Preview className="h-[87px] w-[77px] pt-1 pb-[5px]" />
              <input
                aria-label="재질 이름"
                defaultValue="기본값"
                disabled
                className="ml-[3px] h-[23px] min-w-0 flex-1 border-t-2 border-r border-b border-l-2 border-[#777] border-r-[#ddd] border-b-[#ddd] bg-[#f1f1f1] px-[3px] pb-[3px] text-[13px] leading-4 text-[#888]"
              />
              <div className="ml-1 flex w-[27px] flex-col items-center">
                <button type="button" aria-label="보조 창" className="mt-[3px]">
                  <svg viewBox="0 0 12 18" className="h-[18px] w-3" aria-hidden="true">
                    <path d="M.5.5H11.500V17.500H.5Z" fill="#fff" stroke="#777" />
                    <path d="M0 0H12V9.500H0ZM2.500 16H9.500L6 11.500Z" fill="#000" />
                    <path d="M3 5H9" stroke="#fff" strokeWidth="1.600" />
                  </svg>
                </button>
                <button type="button" aria-label="재질 만들기" className="mt-3">
                  <svg viewBox="0 0 20 22" className="h-[22px] w-5" aria-hidden="true">
                    <path d="M2 5 12 1 20 3V15L12 20 3 17Z" fill="#1a1a1a" />
                    <path d="M4 5 12 2M8 6 17 3M13 8 19 5M13 12 19 9M13 16 19 12" stroke="#d8d3b8" strokeWidth="1.500" />
                    <circle cx="6" cy="16" r="5" fill="#fff" stroke="#111" strokeWidth="1.200" />
                    <path d="M3 16H9M6 13V19" stroke="#111" strokeWidth="1.300" />
                  </svg>
                </button>
                <svg viewBox="0 0 10 10" className="mt-1 h-[26px] w-[26px]" aria-hidden="true">
                  <path d="M0 0H10V10H0Z" fill="#fff" />
                  <path d="M0 0 10 10H0Z" fill="#a4b1ba" />
                </svg>
              </div>
              <div className="w-0.5" />
            </div>
            <div className="flex h-[30px] shrink-0 items-end text-[13px]" role="tablist">
              <button type="button" role="tab" aria-selected="true" className="h-[23px] w-[50px] border-t border-r-2 border-t-white border-r-[#777] pr-[14px] pb-[3px] leading-4">
                선택
              </button>
              <button type="button" role="tab" aria-selected="false" className="h-[21px] w-[47px] border-t border-r-2 border-t-white border-r-[#777] pr-[13px] leading-4">
                편집
              </button>
              <button type="button" aria-label="샘플 칠하기" className="mr-1 mb-1 ml-auto">
                <svg viewBox="0 0 22 22" className="h-[22px] w-[22px]" fill="none" aria-hidden="true">
                  <path d="M2 20 5 14 12 7 15 10 8 17Z" fill="#d8d8d8" stroke="#222" />
                  <path d="M2 20 5 14 9 13 8 17Z" fill="#d8a33c" />
                  <path d="M11 6 16 11M14 7 18 3" stroke="#222" strokeWidth="2.400" />
                  <path d="M13 6 17 1.500Q21 1 20.500 5L16 9Z" fill="#333" />
                </svg>
              </button>
            </div>
            <NavRow id="library" value="색상" />
            <div className="flex min-h-0 flex-1 overflow-hidden bg-white">
              <div className="flex min-h-0 flex-1 flex-wrap content-start gap-0.5 overflow-hidden pt-0.5 pr-10 pl-[3px]">
                {swatches.map((color) => (
                  <button key={color} type="button" aria-label="색상" className="h-[62px] w-[62px] border border-[#999] p-px">
                    <span className={`block h-full w-full ${color}`} />
                  </button>
                ))}
              </div>
              <ScrollBar />
            </div>
            <div className="mt-[3px] h-[6px] shrink-0 border-t-2 border-[#777]" />
            <div className="flex h-[23px] shrink-0 items-center border-y border-[#999] bg-[#e4e4e4] pb-px pl-1 text-[13px] leading-4">선택</div>
            <NavRow id="secondary-library" value="재질" underline />
            <div className="flex h-[33px] shrink-0 overflow-hidden bg-white">
              <div className="flex flex-1 gap-0.5 overflow-hidden pt-0.5 pl-[3px]">
                {[0, 1, 2].map((n) => (
                  <button key={n} type="button" aria-label="폴더" className="flex h-[62px] w-[62px] items-start border border-[#999]">
                    <Folder />
                  </button>
                ))}
              </div>
              <ScrollBar down={false} />
            </div>
          </section>
        </div>
        <div className="flex pl-px">
          <ScrollBar />
        </div>
      </div>
    </aside>
  );
}

function StatusBar() {
  return (
    <footer className="flex h-[29px] shrink-0 items-end bg-[#f1f1f1] pl-[6px]">
      <div className="flex flex-1 items-center pt-1">
        <button type="button" aria-label="위치" className="mr-4">
          <svg viewBox="0 0 19 19" className="block h-[19px] w-[19px]" fill="none" aria-hidden="true">
            <circle cx="9.500" cy="9.500" r="8.300" stroke="#aaa" strokeWidth="1.300" />
            <path d="M9.500 16C9 12 6 10 6 7.500A3.500 3.500 0 0 1 13 7.500C13 10 10 12 9.500 16Z" fill="#999" />
          </svg>
        </button>
        <button type="button" aria-label="제작자 정보" className="mr-4">
          <svg viewBox="0 0 19 19" className="block h-[19px] w-[19px]" fill="none" aria-hidden="true">
            <circle cx="9.500" cy="9.500" r="8.200" stroke="#000" strokeWidth="1.700" />
            <circle cx="9.500" cy="5" r="1.500" fill="#000" />
            <path d="M7 7H12V11H11V15.500H8V11H7Z" fill="#000" />
          </svg>
        </button>
        <button type="button" aria-label="로그인">
          <svg viewBox="0 0 19 19" className="block h-[19px] w-[19px]" fill="none" aria-hidden="true">
            <circle cx="9.500" cy="9.500" r="8.300" stroke="#999" strokeWidth="1.300" />
            <circle cx="9.500" cy="7" r="3.800" fill="#999" />
            <path d="M3 15C4 11.500 15 11.500 16 15 13 18.500 6 18.500 3 15Z" fill="#999" />
          </svg>
        </button>
        <span className="ml-3 h-[14px] w-px bg-[#888]" />
        <p className="ml-[11px] flex-1 text-[17px] leading-6">시작점 선택</p>
        <span className="h-[14px] w-px bg-[#888]" />
        <label htmlFor="length" className="mr-2 ml-3 text-[17px] leading-6">
          길이
        </label>
      </div>
      <input
        id="length"
        defaultValue="1033mm"
        className="mr-[6px] h-[26px] w-[250px] border border-b-0 border-[#b4c0cc] bg-white px-[3px] pt-0.5 text-base leading-6 outline-none"
      />
    </footer>
  );
}

export default function App() {
  return (
    <div className="flex h-screen flex-col overflow-hidden bg-white pt-10 pb-[42px] font-['Open_Sans','Noto_Sans_CJK_KR',sans-serif] text-black">
      <nav className="flex h-6 shrink-0 items-center gap-[15px] pt-0.5 pl-[6px] text-base leading-5 whitespace-nowrap">
        {menus.map((menu) => (
          <button key={menu} type="button">
            {menu}
          </button>
        ))}
      </nav>
      <header className="flex h-12 shrink-0 border-b border-[#a0a0a0] bg-[#f3f3f3]">
        <Toolbar groups={mainTools} />
        <Toolbar groups={viewTools} />
        <Toolbar groups={solidTools} />
        <ShadowBar />
      </header>
      <main className="relative flex min-h-0 flex-1 bg-[#f1f1f1]">
        <div className="flex w-[88px] shrink-0 flex-col">
          <div className="border-r-2 border-b border-[#b8b8b8] bg-[#f3f3f3] pl-0.5">
            <div className="flex h-[10px] items-center pr-1">
              <div className="h-0 flex-1 border-t-2 border-dotted border-[#bdbdbd]" />
            </div>
            {sideTools.map((group, i) => (
              <Fragment key={i}>
                {i > 0 && (
                  <div className="h-2 pt-0.5 pr-1 pl-0.5">
                    <div className="h-px bg-[#8c8c8c]" />
                  </div>
                )}
                <div className="grid w-21 grid-cols-2">
                  {group.map((tool) => (
                    <ToolButton key={tool.label} tool={tool} />
                  ))}
                </div>
              </Fragment>
            ))}
          </div>
        </div>
        <div className="relative min-w-0 flex-1 overflow-hidden border-t-2 border-l-2 border-[#6e6e6a] bg-[#cececc]">
          <Model />
          <div className="absolute right-[14px] bottom-2 flex w-[280px] flex-col items-start gap-[26px]">
            {keyLog.map((entry, i) => (
              <kbd
                key={i}
                className={`flex h-[46px] items-center rounded-md px-[5px] pb-[3px] font-['DejaVu_Sans'] text-[29px] leading-none font-bold whitespace-nowrap shadow-[0_0_4px_2px_rgba(0,0,0,0.08)] [-webkit-text-stroke:1px_currentColor] ${entry.tone}`}
              >
                {entry.text}
              </kbd>
            ))}
          </div>
        </div>
        <Tray />
        <div className="pointer-events-none absolute bottom-0 left-0 h-[72px] w-[1310px] bg-black/43" />
      </main>
      <StatusBar />
    </div>
  );
}
